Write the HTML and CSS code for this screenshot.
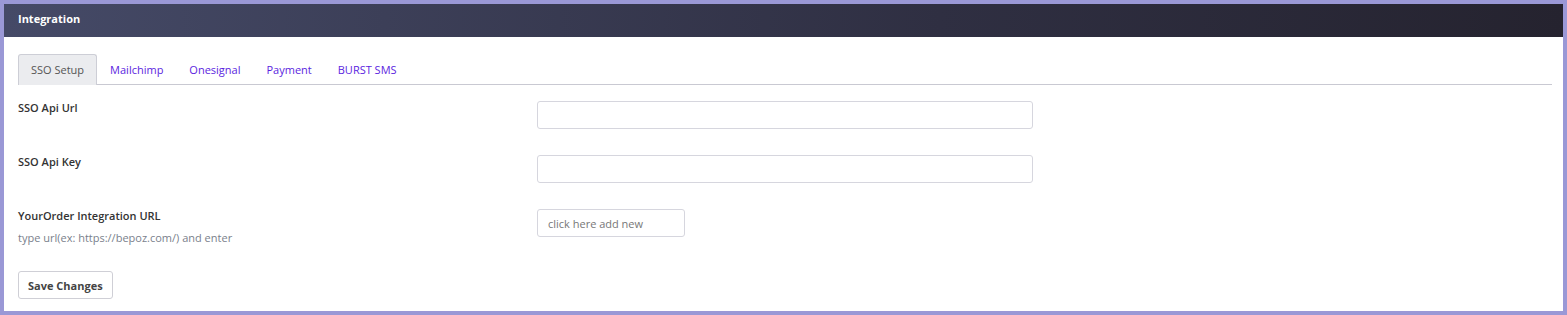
FILE: index.html
```html
<!DOCTYPE html>
<html lang="en">
<head>
    <meta charset="UTF-8">
    <meta name="viewport" content="width=device-width, initial-scale=1.0">
    <title>Integration</title>
    <link rel="stylesheet" href="styles.css">
</head>
<body>
    <div class="card">
        <div class="card-header">Integration</div>
        <div class="card-body">
            <ul class="tabs">
                <li class="tab active">SSO Setup</li>
                <li class="tab">Mailchimp</li>
                <li class="tab">Onesignal</li>
                <li class="tab">Payment</li>
                <li class="tab">BURST SMS</li>
            </ul>
            <form class="tab-pane">
                <div class="form-row">
                    <div class="form-label">
                        <label for="ssoUrl">SSO Api Url</label>
                    </div>
                    <input type="text" id="ssoUrl" class="input">
                </div>
                <div class="form-row">
                    <div class="form-label">
                        <label for="ssoKey">SSO Api Key</label>
                    </div>
                    <input type="text" id="ssoKey" class="input">
                </div>
                <div class="form-row last">
                    <div class="form-label">
                        <label for="orderUrl">YourOrder Integration URL</label>
                        <div class="help">type url(ex: https://bepoz.com/) and enter</div>
                    </div>
                    <input type="text" id="orderUrl" class="input small" placeholder="click here add new">
                </div>
                <button type="button" class="btn">Save Changes</button>
            </form>
        </div>
    </div>
</body>
</html>
```

FILE: styles.css
```css
body {
    margin: 0;
    padding: 4px;
    background: #9a98d6;
    font-family: "Open Sans", "Noto Sans", Arial, sans-serif;
    font-size: 11px;
    color: #333;
}
.card {
    background: #fff;
    height: 307px;
}
.card-header {
    height: 33px;
    line-height: 29px;
    padding: 0 14px;
    background: linear-gradient(90deg, #454a67, #2f2f42 60%, #25232f);
    color: #fff;
    font-weight: 700;
    font-size: 11px;
}
.card-body {
    padding: 17px 11px 0 14px;
}
.tabs {
    display: flex;
    list-style: none;
    margin: 0;
    padding: 0;
    height: 30px;
    border-bottom: 1px solid #c9c9d2;
}
.tab {
    padding: 0 12px;
    line-height: 29px;
    color: #5b1ee0;
    border: 1px solid transparent;
    border-bottom: none;
    border-radius: 3px 3px 0 0;
}
.tab.active {
    color: #555;
    background: #ebecef;
    border-color: #cdced6;
    margin-bottom: -1px;
}
.tab-pane {
    padding-top: 16px;
}
.form-row {
    display: flex;
    align-items: flex-start;
    margin-bottom: 26px;
}
.form-label {
    width: 519px;
    flex-shrink: 0;
    margin-top: -1px;
}
.form-label label {
    font-weight: 600;
    color: #333;
}
.help {
    margin-top: 7px;
    color: #7a7f8c;
}
.input {
    width: 496px;
    height: 28px;
    box-sizing: border-box;
    border: 1px solid #d6d6de;
    border-radius: 3px;
    padding: 0 10px;
    font-family: inherit;
    font-size: 11px;
}
.input.small {
    width: 148px;
}
.input::placeholder {
    color: #777;
}
.btn {
    height: 28px;
    padding: 0 9px;
    background: #fff;
    border: 1px solid #cfcfd6;
    border-radius: 3px;
    font-family: inherit;
    font-size: 11px;
    font-weight: 700;
    color: #444;
}
```
